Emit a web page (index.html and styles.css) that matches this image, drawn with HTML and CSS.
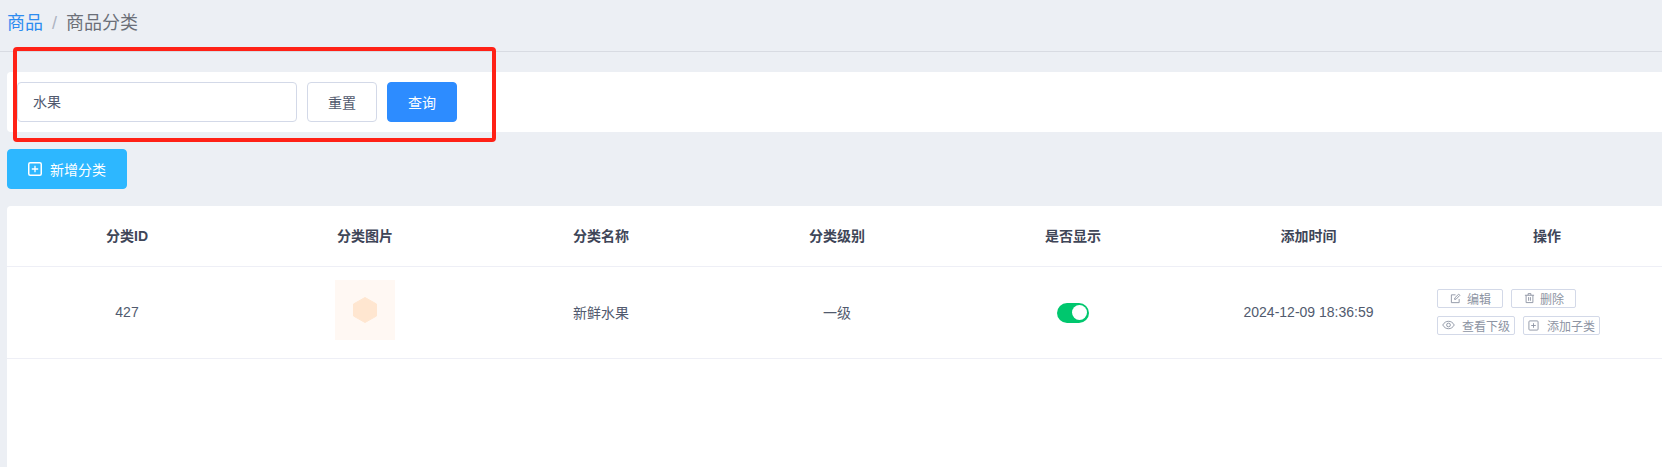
FILE: index.html
```html
<!DOCTYPE html>
<html lang="zh">
<head>
<meta charset="utf-8">
<title>商品分类</title>
<link rel="stylesheet" href="styles.css">
</head>
<body>
<header class="crumbs">
  <a class="crumb-link">商品</a><span class="crumb-sep">/</span><span class="crumb-current">商品分类</span>
</header>
<main class="content">
  <form class="filter">
    <div class="field">水果</div>
    <button type="button" class="btn btn-plain">重置</button>
    <button type="button" class="btn btn-primary">查询</button>
    <div class="highlight"></div>
  </form>
  <div class="toolbar">
    <button type="button" class="btn btn-add">
      <svg class="add-icon" viewBox="0 0 14 14" width="14" height="14"><rect x="0.75" y="0.75" width="12.5" height="12.5" rx="1.500" fill="none" stroke="#fff" stroke-width="1.500"/><path d="M7 3.800v6.400M3.800 7h6.400" stroke="#fff" stroke-width="1.300"/></svg>
      新增分类
    </button>
  </div>
  <section class="table">
    <div class="row row-head">
      <div>分类ID</div><div>分类图片</div><div>分类名称</div><div>分类级别</div><div>是否显示</div><div>添加时间</div><div>操作</div>
    </div>
    <div class="row row-body">
      <div>427</div>
      <div class="cell-center">
        <div class="thumb"><svg viewBox="0 0 24 26" width="24" height="26"><path d="M12 0.5 23.500 7v12L12 25.500.5 19V7z" fill="#ffe6d0" stroke="#ffe6d0" stroke-linejoin="round"/></svg></div>
      </div>
      <div>新鲜水果</div>
      <div>一级</div>
      <div class="cell-center"><span class="switch"><span class="knob"></span></span></div>
      <div>2024-12-09 18:36:59</div>
      <div class="actions">
        <div class="action-row">
          <a class="action action-edit"><svg viewBox="0 0 12 12" width="11" height="11"><path d="M10 6.500V10.500H1.500V2H6M5 7l.3-1.700L9.500 1.200l1.300 1.300L6.700 6.700z" fill="none" stroke="#8d94a3" stroke-width="1"/></svg>编辑</a>
          <a class="action action-del"><svg viewBox="0 0 12 12" width="11" height="12"><path d="M1 3h10M4.500 3V1.200h3V3M2.300 3v8h7.400V3M5 5v4M7 5v4" fill="none" stroke="#8d94a3" stroke-width="1"/></svg>删除</a>
        </div>
        <div class="action-row">
          <a class="action action-view"><svg viewBox="0 0 14 10" width="13" height="10"><path d="M.8 5C2.300 2.300 4.500 1 7 1s4.700 1.300 6.200 4C11.700 7.700 9.500 9 7 9S2.300 7.700.8 5z" fill="none" stroke="#8d94a3" stroke-width="1"/><circle cx="7" cy="5" r="2" fill="none" stroke="#8d94a3" stroke-width="1"/></svg>查看下级</a>
          <a class="action action-child"><svg viewBox="0 0 12 12" width="11" height="11"><rect x="1" y="1" width="10" height="10" rx="1" fill="none" stroke="#8d94a3" stroke-width="1"/><path d="M6 3.500v5M3.500 6h5" stroke="#8d94a3" stroke-width="1"/></svg>添加子类</a>
        </div>
      </div>
    </div>
  </section>
</main>
</body>
</html>
```
FILE: styles.css
```css
* { box-sizing: border-box; }
html, body { height: 100%; }
body {
  margin: 0;
  background: #eceff4;
  font-family: "Liberation Sans", "Noto Sans CJK SC", sans-serif;
  color: #515a6e;
  overflow: hidden;
}
.crumbs {
  height: 52px;
  padding: 11px 0 0 7px;
  border-bottom: 1px solid #d8dbe2;
  font-size: 18px;
  line-height: 24px;
  color: #6b6f78;
}
.crumb-link { color: #2d8cf0; }
.crumb-sep { margin: 0 9px; color: #aeb4c2; }
.content { padding: 20px 0 0 7px; }
.filter {
  position: relative;
  display: flex;
  gap: 10px;
  height: 60px;
  padding: 10px;
  background: #fff;
  border-radius: 4px 0 0 4px;
}
.field {
  width: 280px;
  height: 40px;
  padding: 0 15px;
  border: 1px solid #d3d9e8;
  border-radius: 4px;
  background: #fff;
  font-size: 14px;
  line-height: 38px;
  color: #515a6e;
}
.btn {
  width: 70px;
  height: 40px;
  padding: 0;
  border-radius: 4px;
  font-family: inherit;
  font-size: 14px;
  cursor: pointer;
}
.btn-plain { background: #fff; border: 1px solid #d3d9e8; color: #515a6e; }
.btn-primary { background: #2d8cff; border: 1px solid #2d8cff; color: #fff; }
.highlight {
  position: absolute;
  left: 6px;
  top: -25px;
  width: 483px;
  height: 95px;
  border: 4px solid #ff2116;
  border-radius: 4px;
}
.toolbar { padding-top: 17px; }
.btn-add {
  display: flex;
  align-items: center;
  justify-content: center;
  gap: 8px;
  width: 120px;
  background: #2db7ff;
  border: 1px solid #2db7ff;
  color: #fff;
}
.add-icon { flex: none; }
.table {
  margin-top: 17px;
  height: 261px;
  background: #fff;
  border-radius: 4px 0 0 0;
}
.row {
  display: grid;
  grid-template-columns: 240px 236px 236px 236px 236px 235px 242px;
  align-items: center;
  text-align: center;
  font-size: 14px;
  border-bottom: 1px solid #eeeff6;
}
.row-head { height: 61px; padding-bottom: 2px; font-weight: 700; font-size: 14px; color: #3f4658; }
.row-body { height: 92px; padding-bottom: 2px; color: #515a6e; }
.cell-center { display: flex; justify-content: center; }
.thumb {
  display: flex;
  align-items: center;
  justify-content: center;
  width: 60px;
  height: 60px;
  margin-bottom: 4px;
  background: #fff8f3;
}
.switch {
  display: flex;
  align-items: center;
  justify-content: flex-end;
  width: 32px;
  height: 20px;
  margin-top: 2px;
  padding-right: 2px;
  border-radius: 10px;
  background: #00c76e;
}
.knob { width: 15px; height: 15px; border-radius: 50%; background: #fff; }
.actions {
  display: flex;
  flex-direction: column;
  gap: 8px;
  padding-left: 11px;
  text-align: left;
}
.action-row { display: flex; gap: 8px; }
.action {
  display: inline-flex;
  align-items: center;
  height: 19px;
  border: 1px solid #d3d9e8;
  border-radius: 2px;
  font-size: 12px;
  color: #8d94a3;
  white-space: nowrap;
}
.action svg { flex: none; }
.action-edit { width: 66px; padding-left: 12px; gap: 6px; }
.action-del { width: 65px; padding-left: 12px; gap: 5px; }
.action-view { width: 78px; padding-left: 4px; gap: 7px; }
.action-child { width: 77px; padding-left: 4px; gap: 8px; }
```
